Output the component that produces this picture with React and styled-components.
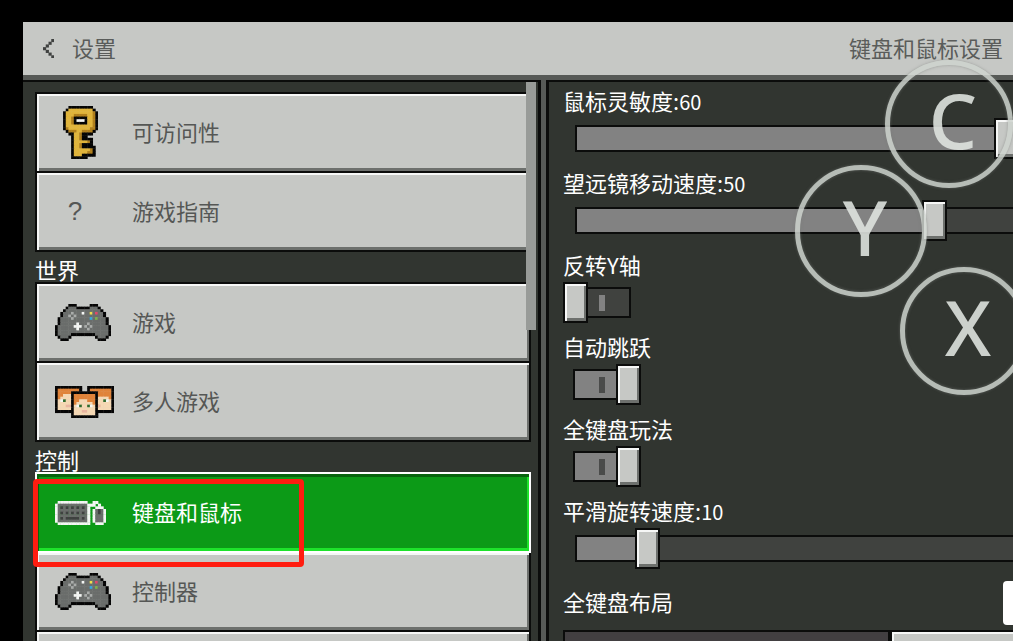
import React, { useState } from 'react';
import styled, { createGlobalStyle, css } from 'styled-components';

const COLORS = {
    K: '#050505',
    Y: '#e0b43a',
    D: '#b07f1c',
    G: '#6a6d6b',
    L: '#a9acaa',
    W: '#f4f6f4',
    T: '#3f4140',
    y: '#f1e04a',
    r: '#e0486a',
    b: '#35a7dc',
    n: '#7fb04c',
    O: '#e08339',
    S: '#f5d8b4',
    P: '#eab5a0',
    E: '#2f6b2c',
};

const KEY = [
    '.....KKKKKKKKK..',
    '....KYYYYYYYYYK.',
    '...KYYYYYYYYYYDK',
    '...KYYYDDDDDYYDK',
    '...KYYDKKKKKYYDK',
    '...KYYDKWWWKYYDK',
    '...KYYDKKKKKYYDK',
    '...KYYYYYYYYYYDK',
    '...KDYYYYYYYYDDK',
    '....KDDDYYDDDDK.',
    '.....KKYYDKKKK..',
    '......KYYDKK....',
    '......KYYDKKKK..',
    '......KYYYYYDK..',
    '......KYYDKKKK..',
    '......KYYDKKKKK.',
    '......KYYYYYYDK.',
    '......KYYYYYDDK.',
    '......KYYYKKKKK.',
    '......KKKKKK....',
];

const CONTROLLER = [
    '.....KKK.....KKK.....',
    '....KGGGKKKKKGGGK....',
    '...KGGGGGGGGGGGGGK...',
    '..KGGGLGGGWGGyGrGGK..',
    '..KGGLGLGGGGGGGGGGK..',
    '.KGGGGLGGGGGGbGnGGGK.',
    '.KGGGGGGGGGGGGGGGGGK.',
    '.KGGGGGGWGGGLGGGGGGK.',
    'KGGGGGGWWWGLGLGGGGGGK',
    'KGGGGGGGWGGGLGGGGGGGK',
    'KGGGGGGGGGGGGGGGGGGGK',
    'KGGGGGKKKKKKKKKGGGGGK',
    '.KGGGK.........KGGGK.',
    '..KKK...........KKK..',
];

const PLAYERS = [
    'KKKKKKKKKK..KKKKKKKKKK',
    'KOOOOOOOOK..KOOOOOOOOK',
    'KOOOOOKKKKKKKKKKOOOOOK',
    'KOOSSSKOOOOOOOOKOOOOOK',
    'KOSSSSKOOOOOOOOKSSSSOK',
    'KSWESSKOOSSSOOOKSSEWSK',
    'KSSSSSKOSSSSSSOKSSSSSK',
    'KSSSPPKSWESSEWSKPSSSSK',
    'KSSSSSKSSSSSSSSKSSSSSK',
    'KKKKKKKSSSPPSSSKKKKKKK',
    '......KSSSSSSSSK......',
    '......KKKKKKKKKK......',
];

const KEYBOARD = [
    '.WWWWWWWWWWW..WW...',
    'WGGGGGGGGGGGWWW.W..',
    'WGTGTGTGTGTGW..WWW.',
    'WGGGGGGGGGGGW.WGTGW',
    'WGTGTGTGTGTGW.WGTGW',
    'WGGGGGGGGGGGW.WGGGW',
    'WGTGTTTTTGTGW.WGGGW',
    'WGGGGGGGGGGGW.WGGGW',
    '.WWWWWWWWWWWW..WWW.',
];

const CHEVRON = ['...T', '..T.', '.T..', 'T...', '.T..', '..T.', '...T'];

// every cell of a sprite is 8/3 px on screen, drawn a little larger so no seams show
const Sprite = ({ rows }) => {
    const cols = rows[0].length;
    return (
        <svg
            width={Math.round((cols * 8) / 3)}
            height={Math.round((rows.length * 8) / 3)}
            viewBox={`0 0 ${cols} ${rows.length}`}
            preserveAspectRatio="none"
            aria-hidden="true"
        >
            {rows.map((row, y) =>
                row.split('').map((cell, x) =>
                    cell === '.' ? null : (
                        <rect key={`${x}-${y}`} x={x} y={y} width="1.15" height="1.15" fill={COLORS[cell]} />
                    )
                )
            )}
        </svg>
    );
};

const groups = [
    {
        items: [
            { id: 'access', text: '可访问性', icon: KEY },
            { id: 'guide', text: '游戏指南' },
        ],
    },
    {
        title: '世界',
        items: [
            { id: 'game', text: '游戏', icon: CONTROLLER },
            { id: 'multi', text: '多人游戏', icon: PLAYERS },
        ],
    },
    {
        title: '控制',
        items: [
            { id: 'keyboard', text: '键盘和鼠标', icon: KEYBOARD },
            { id: 'controller', text: '控制器', icon: CONTROLLER },
            { id: 'touch', text: '' },
        ],
    },
];

const Slider = ({ id, text, start }) => {
    const [value, setValue] = useState(start);
    return (
        <Setting>
            <SettingLabel htmlFor={id}>{text}:<Value>{value}</Value></SettingLabel>
            <Stack>
                <SliderTrack>
                    <SliderFill style={{ width: `${value}%` }} />
                </SliderTrack>
                <Range id={id} type="range" min="0" max="100" value={value} onChange={e => setValue(e.target.value)} />
            </Stack>
        </Setting>
    );
};

const Toggle = ({ id, text, start }) => {
    const [on, setOn] = useState(start);
    return (
        <Setting>
            <SettingLabel htmlFor={id}>{text}</SettingLabel>
            <ToggleStack>
                <ToggleTrack $on={on}><Tick $on={on} /></ToggleTrack>
                <Check id={id} type="checkbox" checked={on} onChange={() => setOn(!on)} />
            </ToggleStack>
        </Setting>
    );
};

const App = () => {
    const [current, setCurrent] = useState('keyboard');

    return (
        <Screen>
            <GlobalStyle />
            <Header>
                <BackButton><Sprite rows={CHEVRON} /><Caption>设置</Caption></BackButton>
                <Title>键盘和鼠标设置</Title>
            </Header>
            <Body>
                <Sidebar>
                    {groups.map((group, i) => (
                        <React.Fragment key={i}>
                            {group.title && <GroupTitle>{group.title}</GroupTitle>}
                            {group.items.map(item => (
                                <NavItem
                                    key={item.id}
                                    $active={item.id === current}
                                    aria-label={item.text || '触摸'}
                                    onClick={() => setCurrent(item.id)}
                                >
                                    <IconCell>
                                        {item.icon && <Sprite rows={item.icon} />}
                                        {item.id === 'guide' && <Question>?</Question>}
                                    </IconCell>
                                    <Caption>{item.text}</Caption>
                                    {item.id === 'keyboard' && <Marker />}
                                </NavItem>
                            ))}
                        </React.Fragment>
                    ))}
                    <ScrollThumb />
                </Sidebar>
                <Panel>
                    <Settings>
                        <Slider id="mouse" text="鼠标灵敏度" start={60} />
                        <Slider id="spyglass" text="望远镜移动速度" start={50} />
                        <Toggle id="invert" text="反转Y轴" start={false} />
                        <Toggle id="jump" text="自动跳跃" start={true} />
                        <Toggle id="full" text="全键盘玩法" start={true} />
                        <Slider id="smooth" text="平滑旋转速度" start={10} />
                        <LayoutRow>
                            <LayoutTitle>全键盘布局</LayoutTitle>
                            <ResetButton aria-label="重置" />
                        </LayoutRow>
                        <BindingRow>
                            <BindingName />
                            <BindingButton aria-label="按键" />
                        </BindingRow>
                    </Settings>
                </Panel>
            </Body>
            <PadButton $size={128} $top={60} $right={0}>C</PadButton>
            <PadButton $size={132} $top={165} $right={86}>Y</PadButton>
            <PadButton $size={128} $top={267} $right={-15}>X</PadButton>
        </Screen>
    );
};

export default App;

const GlobalStyle = createGlobalStyle`
  * {
    box-sizing: border-box;
  }
  body {
    margin: 0;
    background: #000;
    overflow: hidden;
  }
  button, input {
    font: inherit;
    margin: 0;
  }
`;

const bevel = css`
  box-sizing: border-box;
  background: #c6c8c5;
  border: 2px solid #0b0c0b;
  box-shadow: inset 2px 2px 0 #f6f7f6, inset -2px -3px 0 #6d706d;
`;

const Screen = styled.div`
  position: relative;
  display: flex;
  flex-direction: column;
  height: 100vh;
  padding: 22px 0 0 23px;
  overflow: hidden;
  background: #000;
  color: #fff;
  font-family: 'Noto Sans CJK SC', sans-serif;
  font-size: 22px;
`;

const Header = styled.header`
  display: flex;
  flex: none;
  align-items: center;
  justify-content: space-between;
  height: 58px;
  padding: 0 10px 0 20px;
  background: #c6c8c5;
  border-bottom: 5px solid #575a57;
  color: #5a5c5a;
`;

const BackButton = styled.button`
  display: flex;
  align-items: center;
  gap: 18px;
  padding: 0;
  border: none;
  background: none;
  color: inherit;
`;

const Caption = styled.span`
  padding-bottom: 4px;
`;

const Title = styled.h1`
  margin: 0;
  padding-bottom: 4px;
  font-size: 22px;
  font-weight: 400;
`;

const Body = styled.div`
  display: grid;
  flex: 1;
  grid-template-columns: minmax(0, 518fr) minmax(0, 467fr);
  gap: 5px;
  min-height: 0;
  background: #575a57;
`;

const Sidebar = styled.nav`
  position: relative;
  display: flex;
  flex-direction: column;
  padding: 10px 7px 0 12px;
  overflow: hidden;
  background: #313530;
  border-top: 2px solid #0b0c0b;
  border-right: 3px solid #0b0c0b;
`;

const GroupTitle = styled.h2`
  flex: none;
  height: 32px;
  margin: 0;
  padding-top: 7px;
  font-size: 22px;
  font-weight: 400;
  line-height: 24px;
`;

const NavItem = styled.button`
  ${bevel}
  display: flex;
  flex: none;
  align-items: center;
  height: 81px;
  margin-bottom: -2px;
  padding: 0 18px;
  color: #555755;
  text-align: left;

  ${props => props.$active && css`
    position: relative;
    z-index: 1;
    background: #0c9a17;
    border-color: #fff;
    box-shadow: inset 2px 3px 0 #08640e, inset -2px -3px 0 #1ee32b;
    color: #fff;
  `}
`;

const IconCell = styled.span`
  display: flex;
  flex: none;
  align-items: center;
  width: 77px;
`;

const Question = styled.span`
  width: 40px;
  font-family: 'Liberation Sans', sans-serif;
  font-size: 26px;
  text-align: center;
`;

const Marker = styled.span`
  position: absolute;
  top: 5px;
  left: -4px;
  width: 271px;
  height: 88px;
  border: 5px solid #ff1d10;
  border-radius: 4px;
`;

const ScrollThumb = styled.div`
  position: absolute;
  top: 0;
  right: 2px;
  z-index: 2;
  width: 10px;
  height: 248px;
  background: #989b98;
`;

const Panel = styled.main`
  padding: 2px 0 0 14px;
  overflow: hidden;
  background: #313530;
  border-top: 2px solid #0b0c0b;
  border-left: 3px solid #0b0c0b;
`;

// the list runs on past the right side of the panel
const Settings = styled.div`
  display: flex;
  flex-direction: column;
  width: 165%;
`;

const Setting = styled.div`
  display: flex;
  flex-direction: column;
  height: 82px;
`;

const SettingLabel = styled.label`
  height: 34px;
  line-height: 32px;
`;

const Value = styled.span`
  font-size: 20px;
`;

const Stack = styled.div`
  display: grid;
  align-items: center;
  height: 41px;

  > * {
    grid-area: 1 / 1;
  }
`;

const SliderTrack = styled.div`
  height: 27px;
  margin: 0 12px;
  background: #40423f;
  border: 2px solid #0b0c0b;
`;

const SliderFill = styled.div`
  height: 100%;
  background: #828282;
`;

const Range = styled.input`
  width: 100%;
  height: 41px;
  appearance: none;
  background: none;

  &::-webkit-slider-thumb {
    ${bevel}
    width: 25px;
    height: 41px;
    appearance: none;
  }
`;

const ToggleStack = styled(Stack)`
  width: 78px;
`;

const ToggleTrack = styled.div`
  display: flex;
  align-items: center;
  justify-content: center;
  height: 31px;
  margin: 0 10px;
  background: ${props => (props.$on ? '#828282' : '#40423f')};
  border: 2px solid #0b0c0b;
`;

const Tick = styled.span`
  width: 6px;
  height: 16px;
  background: ${props => (props.$on ? '#4a4b4a' : '#828282')};
`;

const Check = styled.input`
  display: flex;
  width: 78px;
  height: 41px;
  appearance: none;

  &::before {
    ${bevel}
    content: '';
    width: 25px;
    height: 41px;
  }

  &:checked {
    justify-content: flex-end;
  }
`;

const LayoutRow = styled.div`
  display: flex;
  align-items: center;
  height: 54px;
`;

const LayoutTitle = styled.h2`
  flex: 0 0 440px;
  margin: 0;
  padding-bottom: 4px;
  font-size: 22px;
  font-weight: 400;
`;

const ResetButton = styled.button`
  flex: 1;
  height: 44px;
  background: #fff;
  border: none;
  border-radius: 4px;
`;

const BindingRow = styled.div`
  display: grid;
  grid-template-columns: 44% 56%;
  height: 60px;
`;

const BindingName = styled.div`
  background: #423f41;
  border: 2px solid #0b0c0b;
`;

const BindingButton = styled.button`
  ${bevel}
`;

const PadButton = styled.button`
  position: absolute;
  top: ${props => props.$top}px;
  right: ${props => props.$right}px;
  z-index: 3;
  display: flex;
  align-items: center;
  justify-content: center;
  width: ${props => props.$size}px;
  height: ${props => props.$size}px;
  padding: 0 0 8px 8px;
  border: 5px solid rgba(206, 211, 206, 0.85);
  border-radius: 50%;
  background: none;
  box-shadow: 0 0 3px rgba(120, 124, 120, 0.6), inset 0 0 3px rgba(120, 124, 120, 0.6);
  color: rgba(222, 226, 222, 0.9);
  font-family: 'Noto Sans', sans-serif;
  font-size: 76px;
  font-weight: 500;
  line-height: 80px;
`;
